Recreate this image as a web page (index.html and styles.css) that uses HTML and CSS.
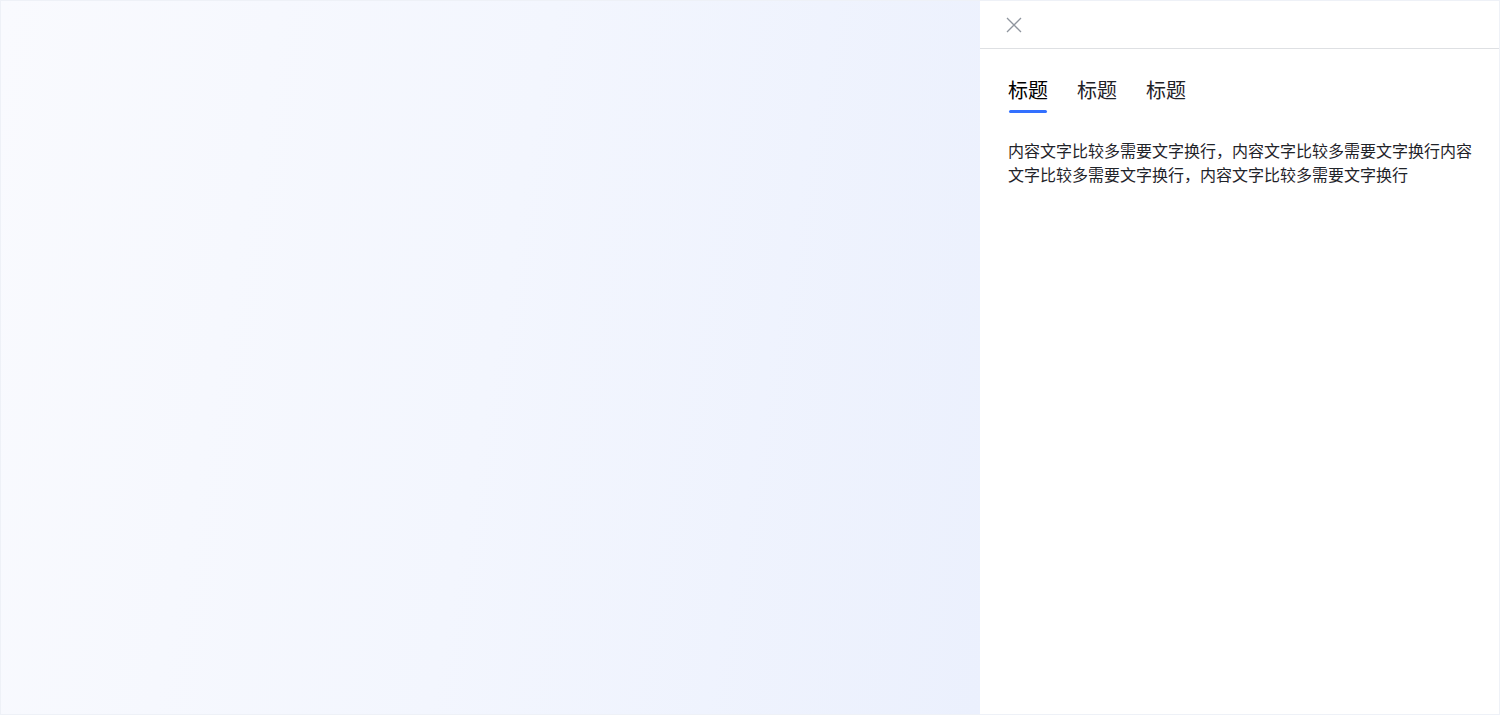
FILE: index.html
```html
<!DOCTYPE html>
<html lang="zh-CN">
<head>
<meta charset="utf-8">
<title>Drawer</title>
<link rel="stylesheet" href="styles.css">
</head>
<body>
<div class="page">
  <div class="backdrop"></div>
  <aside class="drawer">
    <header class="drawer-header">
      <button class="close" aria-label="关闭">
        <svg width="16" height="16" viewBox="0 0 16 16"><path d="M1 1L15 15M15 1L1 15" stroke="#8f959e" stroke-width="1.3" fill="none"/></svg>
      </button>
    </header>
    <div class="drawer-body">
      <nav class="tabs">
        <div class="tab active">标题</div>
        <div class="tab">标题</div>
        <div class="tab">标题</div>
      </nav>
      <p class="content">内容文字比较多需要文字换行，内容文字比较多需要文字换行内容文字比较多需要文字换行，内容文字比较多需要文字换行</p>
    </div>
  </aside>
</div>
</body>
</html>
```

FILE: styles.css
```css
* { box-sizing: border-box; }
html, body { margin: 0; padding: 0; }
body {
  font-family: "Noto Sans CJK SC", "Noto Sans", sans-serif;
  color: #1f2329;
}
.page {
  display: flex;
  width: 1500px;
  height: 715px;
  border: 1px solid #eef1f7;
}
.backdrop {
  width: 979px;
  flex: none;
  background: linear-gradient(100deg, #f9fafe 0%, #f3f6fe 50%, #ebf0fd 100%);
}
.drawer {
  flex: 1;
  background: #fff;
  display: flex;
  flex-direction: column;
}
.drawer-header {
  height: 48px;
  flex: none;
  border-bottom: 1px solid #dee0e3;
  display: flex;
  align-items: center;
  padding-left: 26px;
}
.close {
  border: 0;
  background: none;
  padding: 0;
  width: 16px;
  height: 16px;
  display: flex;
  cursor: pointer;
}
.drawer-body {
  padding: 26px 27px 0 28px;
}
.tabs {
  display: flex;
  gap: 29px;
}
.tab {
  font-size: 20px;
  line-height: 30px;
  color: #1f2329;
  position: relative;
  padding-bottom: 8px;
}
.tab.active { color: #000; font-weight: 400; }
.tab.active::after {
  content: "";
  position: absolute;
  left: 1px;
  right: 1px;
  bottom: 0;
  height: 3px;
  border-radius: 2px;
  background: #3370ff;
}
.content {
  margin: 25px 0 0;
  font-size: 16px;
  line-height: 24px;
  color: #1f2329;
  width: 464px;
}
```
